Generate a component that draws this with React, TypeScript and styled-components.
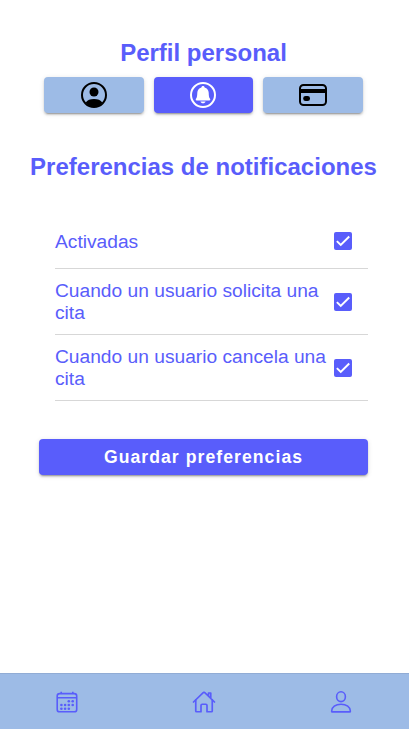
import React from 'react';
import styled, { createGlobalStyle } from 'styled-components';
import { IoHomeOutline } from 'react-icons/io5';

const PRIMARY = '#595dfb';
const LIGHT = '#9dbbe6';
const SHADOW = `0 3px 1px -2px rgba(0, 0, 0, 0.2), 0 2px 2px 0 rgba(0, 0, 0, 0.14),
  0 1px 5px 0 rgba(0, 0, 0, 0.12)`;

const GlobalStyle = createGlobalStyle`
  *, *::before, *::after { box-sizing: border-box; }
  body {
    margin: 0;
    background: #fff;
    color: ${PRIMARY};
    font-family: "Liberation Sans", Arial, sans-serif;
  }
`;

const Page = styled.div`
  display: flex;
  flex-direction: column;
  height: 100vh;
  overflow: hidden;
`;

const Content = styled.main`
  flex: 1;
  padding-top: 39px;
`;

const Title = styled.h1`
  margin: 0 2px 0 0;
  font-size: 24px;
  line-height: 28px;
  font-weight: 700;
  text-align: center;
  white-space: nowrap;
`;

const Tabs = styled.div`
  display: grid;
  grid-template-columns: 100px 99px 100px;
  gap: 10px;
  margin: 10px 0 0 44px;
`;

const Tab = styled.button<{ $active?: boolean }>`
  display: flex;
  align-items: center;
  justify-content: center;
  height: 36px;
  padding: 0 ${(p) => (p.$active ? '1px' : '0')} 0 0;
  border: 0;
  border-radius: 4px;
  background: ${(p) => (p.$active ? PRIMARY : LIGHT)};
  color: ${(p) => (p.$active ? '#fff' : '#000')};
  box-shadow: ${SHADOW};
`;

const TabIcon = styled.svg.attrs({ viewBox: '0 0 32 32', fill: 'none' })`
  width: 32px;
  height: 32px;
`;

const SectionTitle = styled(Title).attrs({ as: 'h2' })`
  margin-top: 40px;
`;

const Options = styled.div`
  margin: 34px 41px 0 55px;
`;

const Option = styled.label<{ $height: number }>`
  display: flex;
  align-items: center;
  justify-content: space-between;
  height: ${(p) => p.$height}px;
  padding-right: 16px;
  border-bottom: 1px solid #d7d7d7;
  font-size: 19.2px;
  line-height: 22px;
`;

const OptionText = styled.span`
  width: 275px;
`;

const Check = styled.span<{ $raised?: boolean }>`
  display: flex;
  width: 18px;
  height: 18px;
  margin-bottom: ${(p) => (p.$raised ? '2px' : '0')};
  flex-shrink: 0;
  border-radius: 2px;
  background: ${PRIMARY};

  svg {
    width: 18px;
    height: 18px;
  }
`;

const SaveButton = styled.button`
  display: block;
  width: 329px;
  height: 36px;
  margin: 38px 0 0 39px;
  padding: 0;
  border: 0;
  border-radius: 4px;
  background: ${PRIMARY};
  color: #fff;
  font: 700 17.6px/36px "Liberation Sans", Arial, sans-serif;
  letter-spacing: 1.06px;
  box-shadow: ${SHADOW};
`;

const BottomBar = styled.nav`
  display: grid;
  grid-template-columns: repeat(3, 137px);
  justify-content: center;
  height: 56px;
  border-top: 1px solid #91acd5;
  background: ${LIGHT};
`;

const BarItem = styled.a`
  display: flex;
  align-items: center;
  justify-content: center;
  padding: 1px 2px 0 0;

  svg {
    width: 24px;
    height: 24px;
  }
`;

const HomeIcon = styled(IoHomeOutline)`
  path {
    stroke-width: 36px;
  }
`;

const PersonTabIcon = () => (
  <TabIcon>
    <circle cx="16" cy="16" r="12" stroke="currentColor" strokeWidth="2" />
    <circle cx="16" cy="13" r="4.5" fill="currentColor" />
    <path d="M7.7 23.4C9.2 21 12.2 19.9 16 19.9s6.8 1.1 8.3 3.5C22.2 26.3 19.4 28 16 28s-6.2-1.7-8.3-4.6Z" fill="currentColor" />
  </TabIcon>
);

const BellTabIcon = () => (
  <TabIcon>
    <circle cx="16" cy="16" r="12" stroke="currentColor" strokeWidth="2" />
    <path
      d="M16 7.1c.9 0 1.5.6 1.6 1.4 2.6.7 4 2.6 4.1 5.2.1 3.2.3 4.4 1 5.5.4.5.6.9.6 1.4 0 .6-.4.9-1.1.9H9.800c-.7 0-1.100-.300-1.100-.900 0-.500.200-.900.600-1.400.7-1.100.9-2.300 1-5.500.1-2.600 1.500-4.500 4.100-5.200.1-.8.7-1.400 1.600-1.400ZM13.400 22.400h5.200c-.4 1.200-1.300 1.800-2.600 1.800s-2.200-.6-2.600-1.800Z"
      fill="currentColor"
    />
  </TabIcon>
);

const CardTabIcon = () => (
  <TabIcon>
    <rect x="3" y="6" width="26" height="20" rx="3.5" stroke="currentColor" strokeWidth="2" />
    <path d="M3 12h26" stroke="currentColor" strokeWidth="4" />
    <rect x="6.2" y="16.9" width="6.8" height="5.2" rx="2.4" fill="currentColor" />
  </TabIcon>
);

const CALENDAR_DOTS = [
  [13.4, 11.6], [17.3, 11.6],
  [6, 15.3], [9.7, 15.3], [13.4, 15.3], [17.3, 15.3],
  [6, 19], [9.7, 19], [13.4, 19],
];

const CalendarIcon = () => (
  <svg viewBox="0 0 24 24" fill="none" stroke="currentColor" strokeWidth="1.6">
    <rect x="2.2" y="3.6" width="19.5" height="18.2" rx="2.4" />
    <path d="M2.2 7.8h19.5M6.2 1.8v2M17.8 1.8v2" />
    <g fill="currentColor" stroke="none">
      {CALENDAR_DOTS.map(([x, y]) => (
        <circle key={`${x}-${y}`} cx={x + 0.4} cy={y - 0.3} r="1.3" />
      ))}
    </g>
  </svg>
);

const UserIcon = () => (
  <svg viewBox="0 0 24 24" fill="none" stroke="currentColor" strokeWidth="1.6" strokeLinejoin="round">
    <ellipse cx="12" cy="6.7" rx="4.4" ry="4.9" />
    <path d="M2.6 21.2c0-4.1 4-6.9 9.4-6.9s9.4 2.8 9.4 6.9c0 .4-.3.7-.7.7H3.300c-.4 0-.7-.3-.7-.7Z" />
  </svg>
);

const options = [
  { text: 'Activadas', height: 54, raised: true },
  { text: 'Cuando un usuario solicita una cita', height: 66 },
  { text: 'Cuando un usuario cancela una cita', height: 66 },
];

export default function App() {
  return (
    <Page>
      <GlobalStyle />
      <Content>
        <Title>Perfil personal</Title>
        <Tabs>
          <Tab aria-label="Perfil"><PersonTabIcon /></Tab>
          <Tab aria-label="Notificaciones" $active><BellTabIcon /></Tab>
          <Tab aria-label="Pago"><CardTabIcon /></Tab>
        </Tabs>
        <SectionTitle>Preferencias de notificaciones</SectionTitle>
        <Options>
          {options.map((o) => (
            <Option key={o.text} $height={o.height}>
              <OptionText>{o.text}</OptionText>
              <Check $raised={o.raised}>
                <svg viewBox="0 0 24 24" fill="none" stroke="#fff" strokeWidth="2.6">
                  <path d="M3.8 12.2 9 17.3 20.3 6" />
                </svg>
              </Check>
            </Option>
          ))}
        </Options>
        <SaveButton>Guardar preferencias</SaveButton>
      </Content>
      <BottomBar>
        <BarItem><CalendarIcon /></BarItem>
        <BarItem><HomeIcon /></BarItem>
        <BarItem><UserIcon /></BarItem>
      </BottomBar>
    </Page>
  );
}
